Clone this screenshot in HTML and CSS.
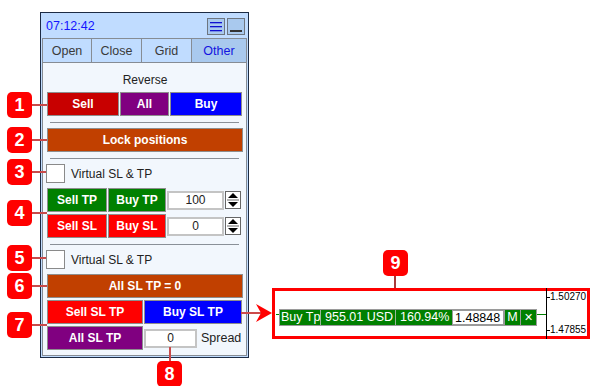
FILE: index.html
```html
<!DOCTYPE html>
<html lang="en">
<head>
    <meta charset="UTF-8">
    <meta name="viewport" content="width=device-width, initial-scale=1.0">
    <title>Trade Panel - Other tab</title>
    <link rel="stylesheet" href="styles.css">
</head>
<body>
<div class="stage">

    <!-- trading panel -->
    <div class="panel">
        <div class="titlebar">
            <span class="clock">07:12:42</span>
            <div class="win-buttons">
                <span class="win-btn">
                    <svg width="16" height="15" viewBox="0 0 16 15">
                        <rect x="2" y="3" width="12" height="1.3" fill="#1010d0"/>
                        <rect x="2" y="7" width="12" height="1.3" fill="#1010d0"/>
                        <rect x="2" y="11" width="12" height="1.3" fill="#1010d0"/>
                    </svg>
                </span>
                <span class="win-btn">
                    <svg width="16" height="15" viewBox="0 0 16 15">
                        <rect x="2" y="11" width="12" height="2" fill="#333"/>
                    </svg>
                </span>
            </div>
        </div>

        <div class="frame">
            <div class="tabs">
                <div class="tab">Open</div>
                <div class="tab">Close</div>
                <div class="tab">Grid</div>
                <div class="tab active">Other</div>
            </div>

            <div class="content">
                <div class="caption">Reverse</div>
                <div class="row row-reverse">
                    <button class="btn dark-red">Sell</button>
                    <button class="btn purple">All</button>
                    <button class="btn blue">Buy</button>
                </div>

                <div class="sep"></div>
                <button class="btn brown">Lock positions</button>
                <div class="sep"></div>

                <label class="check"><span class="check-box"></span>Virtual SL &amp; TP</label>
                <div class="row row-tp">
                    <button class="btn green">Sell TP</button>
                    <button class="btn green">Buy TP</button>
                    <input class="num" type="text" value="100">
                    <span class="spin">
                        <svg width="16" height="18" viewBox="0 0 16 18">
                            <rect x="0.5" y="0.5" width="15" height="17" fill="#fff" stroke="#666"/>
                            <polygon points="3,7 13,7 8,2" fill="#000"/>
                            <line x1="2" y1="9" x2="14" y2="9" stroke="#666"/>
                            <polygon points="3,11 13,11 8,16" fill="#000"/>
                        </svg>
                    </span>
                </div>
                <div class="row row-tp">
                    <button class="btn red">Sell SL</button>
                    <button class="btn red">Buy SL</button>
                    <input class="num" type="text" value="0">
                    <span class="spin">
                        <svg width="16" height="18" viewBox="0 0 16 18">
                            <rect x="0.5" y="0.5" width="15" height="17" fill="#fff" stroke="#666"/>
                            <polygon points="3,7 13,7 8,2" fill="#000"/>
                            <line x1="2" y1="9" x2="14" y2="9" stroke="#666"/>
                            <polygon points="3,11 13,11 8,16" fill="#000"/>
                        </svg>
                    </span>
                </div>

                <div class="sep"></div>
                <label class="check"><span class="check-box"></span>Virtual SL &amp; TP</label>
                <button class="btn brown">All SL TP = 0</button>
                <div class="row row-half">
                    <button class="btn red">Sell SL TP</button>
                    <button class="btn blue">Buy SL TP</button>
                </div>
                <div class="row row-half">
                    <button class="btn purple">All SL TP</button>
                    <input class="num num-spread" type="text" value="0">
                    <span class="spread-label">Spread</span>
                </div>
            </div>
        </div>
    </div>

    <!-- numbered callouts -->
    <div class="lead lead-h l1"></div>
    <div class="lead lead-h l2"></div>
    <div class="lead lead-h l3"></div>
    <div class="lead lead-h l4"></div>
    <div class="lead lead-h l5"></div>
    <div class="lead lead-h l6"></div>
    <div class="lead lead-h l7"></div>
    <div class="lead lead-v l8"></div>
    <div class="lead lead-v l9"></div>

    <div class="callout c1">1</div>
    <div class="callout c2">2</div>
    <div class="callout c3">3</div>
    <div class="callout c4">4</div>
    <div class="callout c5">5</div>
    <div class="callout c6">6</div>
    <div class="callout c7">7</div>
    <div class="callout c8">8</div>
    <div class="callout c9">9</div>

    <svg class="arrow" width="32" height="22" viewBox="0 0 32 22">
        <line x1="0" y1="11" x2="24" y2="11" stroke="#cc4a4a" stroke-width="2"/>
        <polygon points="31,11 15,2 20,11 15,20" fill="#ff0000"/>
    </svg>

    <!-- chart line preview -->
    <div class="chart">
        <div class="price-line"></div>
        <div class="line-bar">
            <span class="seg seg-name">Buy Tp</span>
            <span class="seg seg-money">955.01 USD</span>
            <span class="seg seg-pct">160.94%</span>
            <span class="seg-price">1.48848</span>
            <span class="seg-btn">M</span>
            <span class="seg-btn seg-close">&#x2715;</span>
        </div>
        <div class="axis"></div>
        <div class="tick tick-top">1.50270</div>
        <div class="tick tick-bottom">1.47855</div>
    </div>
</div>
</body>
</html>
```

FILE: styles.css
```css
/* page */
html, body {
    margin: 0;
    padding: 0;
}

body {
    font-family: "Liberation Sans", Arial, sans-serif;
    font-size: 12px;
    color: #222;
    background: #fff;
}

.stage {
    position: relative;
    width: 595px;
    height: 386px;
    overflow: hidden;
}

/* panel */
.panel {
    margin: 12px 0 0 40px;
    width: 209px;
    box-sizing: border-box;
    border: 1px solid #1c2b44;
    background: #c0dcff;
}

.titlebar {
    height: 25px;
    display: flex;
    align-items: center;
    justify-content: space-between;
    padding: 0 3px 0 5px;
}

.clock {
    color: #1414ff;
    font-size: 12.5px;
}

.win-buttons {
    display: flex;
    gap: 2px;
    margin-top: 2px;
}

.win-btn {
    width: 18px;
    height: 17px;
    box-sizing: border-box;
    border: 1px solid #6e7680;
    background: #a9c9ee;
    display: flex;
    align-items: center;
    justify-content: center;
}

.frame {
    margin: 0 1px 1px;
    border: 1px solid #868c94;
}

.tabs {
    display: grid;
    grid-template-columns: 49px 50px 50px 1fr;
    height: 23px;
    border-bottom: 1px solid #868c94;
}

.tab {
    display: flex;
    align-items: center;
    justify-content: center;
    color: #3a3a3a;
    font-size: 12.5px;
    border-right: 1px solid #868c94;
}

.tab.active {
    background: #a9c9ee;
    color: #1414e0;
    border-right: none;
}

.content {
    background: #f2f7fd;
    padding: 9px 3px 5px 4px;
    display: flex;
    flex-direction: column;
}

.caption {
    text-align: center;
    line-height: 16px;
    margin-bottom: 4px;
    color: #222;
}

.row {
    display: grid;
    gap: 1px;
}

.row-reverse {
    grid-template-columns: 72px 49px 72px;
}

.row-tp {
    grid-template-columns: 60px 58px 57px 16px;
    align-items: center;
    margin-bottom: 2px;
}

.row-half {
    grid-template-columns: 96px 98px;
    margin-top: 2px;
}

.row-half:last-child {
    grid-template-columns: 96px 53px 1fr;
}

.sep {
    height: 1px;
    background: #8a9098;
    margin: 6px 4px 5px 3px;
}

.row-tp + .sep {
    margin-top: 4px;
}

/* buttons */
.btn {
    height: 24px;
    box-sizing: border-box;
    border: 1px solid #8e8e8e;
    padding: 0;
    font-family: inherit;
    font-size: 12px;
    font-weight: bold;
    color: #fff;
    cursor: pointer;
}

.dark-red { background: #c80000; }
.purple { background: #800080; }
.blue { background: #0000ff; }
.brown { background: #c14000; }
.green { background: #008000; }
.red { background: #ff0000; }

.check {
    display: flex;
    align-items: center;
    gap: 6px;
    height: 19px;
    margin: 0 0 5px -1px;
    color: #222;
}

.check-box {
    width: 19px;
    height: 19px;
    box-sizing: border-box;
    border: 1px solid #8a8a8a;
    background: #fff;
}

.num {
    height: 19px;
    box-sizing: border-box;
    width: 100%;
    border: 2px solid #c4c4c4;
    background: #fff;
    font-family: inherit;
    font-size: 12px;
    color: #222;
    text-align: center;
    padding: 0;
}

.spin {
    display: flex;
    align-items: center;
}

.num-spread {
    align-self: center;
}

.spread-label {
    align-self: center;
    padding-left: 3px;
    font-size: 12.5px;
}

/* callouts */
.callout {
    position: absolute;
    width: 25px;
    height: 26px;
    border-radius: 5px;
    background: #ff0000;
    color: #fff;
    font-size: 18px;
    font-weight: bold;
    display: flex;
    align-items: center;
    justify-content: center;
}

.c1 { left: 7px; top: 92px; }
.c2 { left: 7px; top: 127px; }
.c3 { left: 7px; top: 159px; }
.c4 { left: 7px; top: 200px; }
.c5 { left: 7px; top: 245px; }
.c6 { left: 7px; top: 273px; }
.c7 { left: 7px; top: 312px; }
.c8 { left: 157px; top: 361px; }
.c9 { left: 383px; top: 250px; }

.lead {
    position: absolute;
    background: #c94a4a;
}

.lead-h {
    left: 30px;
    width: 17px;
    height: 2px;
}

.lead-v {
    width: 2px;
}

.l1 { top: 104px; }
.l2 { top: 139px; }
.l3 { top: 171px; width: 16px; }
.l4 { top: 212px; }
.l5 { top: 257px; width: 16px; }
.l6 { top: 285px; }
.l7 { top: 324px; }
.l8 { left: 169px; top: 347px; height: 16px; }
.l9 { left: 394px; top: 274px; height: 35px; background: #a83a3a; }

.arrow {
    position: absolute;
    left: 241px;
    top: 302px;
}

/* chart preview */
.chart {
    position: absolute;
    left: 272px;
    top: 288px;
    width: 318px;
    height: 51px;
    box-sizing: border-box;
    border: 3px solid #ff0000;
    background: #fff;
}

.price-line {
    position: absolute;
    left: 1px;
    top: 23px;
    width: 270px;
    height: 1px;
    background: #008000;
}

.line-bar {
    position: absolute;
    left: 4px;
    top: 18px;
    height: 17px;
    box-sizing: border-box;
    border: 1px solid #9a9a9a;
    background: #008000;
    color: #fff;
    font-size: 12.5px;
    display: flex;
    align-items: stretch;
    line-height: 15px;
}

.seg {
    border-right: 1px solid #9ab89a;
    padding: 0 3px 0 2px;
    white-space: nowrap;
    overflow: hidden;
}

.seg-name { width: 36px; padding-left: 1px; }
.seg-money { width: 67px; padding-left: 4px; }
.seg-pct { width: 49px; border-right: none; padding-left: 4px; }

.seg-price {
    width: 52px;
    background: #fff;
    color: #000;
    border: 1px solid #9a9a9a;
    padding-left: 2px;
    box-sizing: border-box;
    overflow: hidden;
    white-space: nowrap;
}

.seg-btn {
    width: 15px;
    text-align: center;
    border-left: 1px solid #9a9a9a;
}

.seg-close {
    font-size: 11px;
}

.axis {
    position: absolute;
    left: 271px;
    top: -3px;
    bottom: -3px;
    width: 1px;
    background: #000;
}

.tick {
    position: absolute;
    left: 272px;
    font-size: 10px;
    line-height: 12px;
    color: #000;
    padding-left: 3px;
}

.tick::before {
    content: "";
    position: absolute;
    left: 0;
    top: 6px;
    width: 3px;
    height: 1px;
    background: #000;
}

.tick-top { top: 0; }
.tick-bottom { top: 33px; }
```
